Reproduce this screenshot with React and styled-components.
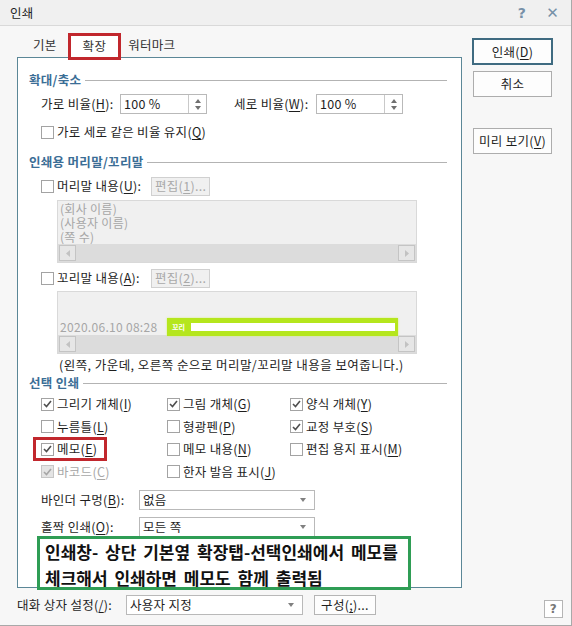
import React from 'react';
import styled, { createGlobalStyle } from 'styled-components';

const GlobalStyle = createGlobalStyle`
  html, body {
    margin: 0;
    padding: 0;
    background: #f7f7f7;
  }
  body {
    font-family: "Noto Sans CJK KR", "Noto Sans", sans-serif;
    font-size: 12.5px;
    letter-spacing: 0.3px;
    color: #1e1e1e;
  }
  u {
    text-decoration-thickness: 1px;
    text-underline-offset: 2px;
  }
`;

// Window frame
const Dialog = styled.div`
  position: relative;
  width: 572px;
  height: 626px;
  box-sizing: border-box;
  background: #f7f7f7;
  border-right: 1px solid #a9a9a9;
  border-bottom: 1px solid #a9a9a9;
  display: flex;
  flex-direction: column;
`;

const TitleBar = styled.div`
  height: 25px;
  flex: 0 0 25px;
  display: flex;
  align-items: center;
  padding: 0 12px 0 10px;
  background: #f0f0f0;
  border-bottom: 1px solid #d9d9d9;
`;

const Title = styled.span`
  font-size: 12.5px;
  line-height: 14px;
  color: #222;
`;

const TitleIcons = styled.div`
  margin-left: auto;
  display: flex;
  align-items: center;
  gap: 20px;
`;

const TitleIcon = styled.span`
  font-family: "DejaVu Sans", sans-serif;
  font-weight: bold;
  font-size: ${p => p.size || 14}px;
  color: #7790a8;
  line-height: 14px;
`;

// Body
const Body = styled.div`
  display: flex;
  padding: 7px 0 0 17px;
  gap: 10px;
`;

const MainColumn = styled.div`
  width: 445px;
  display: flex;
  flex-direction: column;
`;

const TabBar = styled.div`
  height: 24px;
  display: flex;
  align-items: stretch;
  padding-left: 11px;
  gap: 6px;
  position: relative;
  z-index: 1;
`;

const Tab = styled.div`
  display: flex;
  align-items: center;
  padding: ${p => (p.active ? '0 12px' : '0 5px')};
  margin-left: ${p => (p.last ? '-4px' : '0')};
  line-height: 14px;
  color: #333;
  ${p => p.active && `
    background: #fff;
    border: 3px solid #c1272d;
    margin-bottom: -3px;
    box-sizing: border-box;
    padding-bottom: 2px;
  `}
`;

const Panel = styled.div`
  height: 531px;
  box-sizing: border-box;
  background: #fff;
  border: 1px solid #5b8797;
  padding: 13px 14px 0 11px;
  display: flex;
  flex-direction: column;
`;

const GroupHeading = styled.div`
  height: 18px;
  margin-top: ${p => p.gap || 0}px;
  display: flex;
  align-items: center;
  gap: 4px;
  font-weight: bold;
  color: #3b6e96;
  line-height: 14px;

  &::after {
    content: '';
    flex: 1;
    border-top: 1px solid #b3b3b3;
  }
`;

const Row = styled.div`
  height: ${p => p.h || 20}px;
  margin-top: ${p => p.gap || 0}px;
  padding-left: ${p => (p.flush ? 0 : 12)}px;
  display: flex;
  align-items: center;
  line-height: 14px;
`;

const FieldLabel = styled.span`
  width: ${p => p.w}px;
  flex: 0 0 ${p => p.w}px;
  white-space: nowrap;
  color: ${p => (p.muted ? '#a8a8a8' : '#1e1e1e')};
`;

const SpinField = styled.div`
  width: 87px;
  height: 20px;
  box-sizing: border-box;
  display: flex;
  border: 1px solid #b9b9b9;
  background: #fff;
`;

const SpinValue = styled.span`
  flex: 1;
  padding-left: 3px;
  display: flex;
  align-items: center;
`;

const SpinButtons = styled.div`
  width: 17px;
  border-left: 1px solid #c9c9c9;
  display: flex;
  flex-direction: column;
  align-items: center;
  justify-content: center;
  gap: 3px;
`;

const Box = styled.span`
  width: 13px;
  height: 13px;
  flex: 0 0 13px;
  box-sizing: border-box;
  border: 1px solid ${p => (p.disabled ? '#c6c6c6' : '#a3a3a3')};
  background: ${p => (p.disabled ? '#e4e4e4' : '#fff')};
  display: flex;
  align-items: center;
  justify-content: center;
  margin-right: 3px;
`;

const CheckItem = styled.div`
  position: relative;
  justify-self: start;
  display: flex;
  align-items: center;
  white-space: nowrap;
  color: ${p => (p.disabled ? '#a8a8a8' : '#1e1e1e')};

  ${p => p.marked && `
    &::before {
      content: '';
      position: absolute;
      left: -8px;
      right: -10px;
      top: -5px;
      bottom: -5px;
      border: 3px solid #c1272d;
      pointer-events: none;
    }
  `}
`;

const EditButton = styled.span`
  height: 19px;
  box-sizing: border-box;
  padding: 0 3px;
  display: flex;
  align-items: center;
  border: 1px solid #d0d0d0;
  background: #f0f0f0;
  color: #a9a9a9;
`;

const Preview = styled.div`
  margin: ${p => p.gap}px 0 0 28px;
  width: 360px;
  height: ${p => p.h}px;
  box-sizing: border-box;
  border: 1px solid #d9d9d9;
  background: #f0f0f0;
  display: flex;
  flex-direction: column;
`;

const PreviewLines = styled.div`
  flex: 1;
  padding: 1px 0 0 2px;
  color: #a6a6a6;
  line-height: 14px;
  display: flex;
  flex-direction: column;
  justify-content: ${p => (p.bottom ? 'flex-end' : 'flex-start')};
`;

const PreviewLine = styled.span`
  height: 14px;
  font-size: 12px;
  white-space: nowrap;
`;

const FooterLine = styled.div`
  display: flex;
  align-items: center;
  height: 18px;
  margin-bottom: -1px;
  position: relative;
`;

const DateText = styled.span`
  width: 107px;
  flex: 0 0 107px;
  font-size: 12px;
`;

const LimeMark = styled.div`
  width: 231px;
  height: 18px;
  box-sizing: border-box;
  padding: 5px 3px 5px 5px;
  background: #b5e61d;
  box-shadow: 0 0 2px #d7f07a;
  display: flex;
  align-items: center;
  gap: 6px;
`;

const LimeLabel = styled.span`
  font-size: 7px;
  font-weight: bold;
  line-height: 8px;
  letter-spacing: 0;
  color: #fff;
`;

const LimeBar = styled.span`
  flex: 1;
  height: 8px;
  background: #fff;
`;

const ScrollBar = styled.div`
  height: 18px;
  flex: 0 0 18px;
  background: #dcdcdc;
  display: flex;
  align-items: center;
  justify-content: space-between;
  padding: 0 1px;
`;

const ScrollArrow = styled.span`
  width: 17px;
  height: 16px;
  box-sizing: border-box;
  border: 1px solid #c4c4c4;
  background: #e6e6e6;
  display: flex;
  align-items: center;
  justify-content: center;
`;

const Note = styled.div`
  height: 16px;
  margin: 3px 0 0 30px;
  line-height: 16px;
  letter-spacing: 0.45px;
  white-space: nowrap;
`;

const OptionGrid = styled.div`
  display: grid;
  grid-template-columns: 126px 123px 1fr;
  grid-auto-rows: 22.5px;
  align-items: center;
  padding-left: 12px;
  margin-top: 1px;
  line-height: 14px;
`;

const Select = styled.div`
  width: ${p => p.w}px;
  height: 20px;
  box-sizing: border-box;
  border: 1px solid #b9b9b9;
  background: #fff;
  display: flex;
  align-items: center;
  padding: 0 8px 0 3px;
`;

const SelectValue = styled.span`
  flex: 1;
`;

// Right side buttons
const SideColumn = styled.div`
  width: 81px;
  padding-top: 5px;
  display: flex;
  flex-direction: column;
  align-items: flex-end;
`;

const DialogButton = styled.div`
  width: ${p => (p.primary ? 81 : 79)}px;
  height: ${p => (p.primary ? 27 : 26)}px;
  margin-top: ${p => p.gap || 0}px;
  margin-right: ${p => (p.primary ? 0 : 1)}px;
  box-sizing: border-box;
  border: ${p => (p.primary ? '2px solid #3f6b81' : '1px solid #adadad')};
  background: #fdfdfd;
  display: flex;
  align-items: center;
  justify-content: center;
  line-height: 14px;
  white-space: nowrap;
  color: #1e1e1e;
`;

// Footer
const Footer = styled.div`
  display: flex;
  align-items: flex-start;
  padding: 7px 8px 0 17px;
`;

const FooterButton = styled.div`
  margin-left: 11px;
  width: 62px;
  height: 20px;
  box-sizing: border-box;
  border: 1px solid #b5b5b5;
  background: #fdfdfd;
  display: flex;
  align-items: center;
  justify-content: center;
  line-height: 14px;
`;

const HelpButton = styled.div`
  margin: 5px 0 0 auto;
  width: 19px;
  height: 18px;
  box-sizing: border-box;
  border: 1px solid #b5b5b5;
  background: #fff;
  display: flex;
  align-items: center;
  justify-content: center;
  font-family: "DejaVu Sans", sans-serif;
  font-weight: bold;
  font-size: 12px;
  color: #777;
`;

// Annotation laid over the dialog
const Callout = styled.div`
  position: absolute;
  left: 37px;
  top: 536px;
  width: 374px;
  height: 54px;
  box-sizing: border-box;
  border: 3px solid #2f9d55;
  background: #fff;
  padding-left: 5px;
  font-size: 17px;
  font-weight: bold;
  line-height: 26px;
  letter-spacing: 0;
  word-spacing: 3px;
  white-space: nowrap;
  color: #111;
`;

const Check = ({ disabled }) => (
  <svg width="9" height="8" viewBox="0 0 9 8">
    <path d="M1 4 L3.5 6.5 L8 1" fill="none" stroke={disabled ? '#a6a6a6' : '#4f4f4f'} strokeWidth="1.6" />
  </svg>
);

const CheckBox = ({ checked, disabled, marked, children }) => (
  <CheckItem disabled={disabled} marked={marked}>
    <Box disabled={disabled}>{checked && <Check disabled={disabled} />}</Box>
    {children}
  </CheckItem>
);

const Triangle = ({ dir, color = '#707070' }) => {
  const paths = {
    up: 'M0 4 L3 0 L6 4 Z',
    down: 'M0 0 L3 4 L6 0 Z',
    left: 'M4 0 L0 3.5 L4 7 Z',
    right: 'M0 0 L4 3.5 L0 7 Z',
  };
  const horiz = dir === 'left' || dir === 'right';
  return (
    <svg width={horiz ? 4 : 6} height={horiz ? 7 : 4} viewBox={horiz ? '0 0 4 7' : '0 0 6 4'}>
      <path d={paths[dir]} fill={color} />
    </svg>
  );
};

const Spin = ({ value }) => (
  <SpinField>
    <SpinValue>{value}</SpinValue>
    <SpinButtons>
      <Triangle dir="up" />
      <Triangle dir="down" />
    </SpinButtons>
  </SpinField>
);

const Dropdown = ({ w, value }) => (
  <Select w={w}>
    <SelectValue>{value}</SelectValue>
    <Triangle dir="down" color="#808080" />
  </Select>
);

const Scroll = () => (
  <ScrollBar>
    <ScrollArrow><Triangle dir="left" color="#c2c2c2" /></ScrollArrow>
    <ScrollArrow><Triangle dir="right" color="#c2c2c2" /></ScrollArrow>
  </ScrollBar>
);

const options = [
  { label: <>그리기 개체(<u>I</u>)</>, checked: true },
  { label: <>그림 개체(<u>G</u>)</>, checked: true },
  { label: <>양식 개체(<u>Y</u>)</>, checked: true },
  { label: <>누름틀(<u>L</u>)</> },
  { label: <>형광펜(<u>P</u>)</> },
  { label: <>교정 부호(<u>S</u>)</>, checked: true },
  { label: <>메모(<u>E</u>)</>, checked: true, marked: true },
  { label: <>메모 내용(<u>N</u>)</> },
  { label: <>편집 용지 표시(<u>M</u>)</> },
  { label: <>바코드(<u>C</u>)</>, checked: true, disabled: true },
  { label: <>한자 발음 표시(<u>J</u>)</> },
];

export default function App() {
  return (
    <>
      <GlobalStyle />
      <Dialog>
        <TitleBar>
          <Title>인쇄</Title>
          <TitleIcons>
            <TitleIcon size={14}>?</TitleIcon>
            <TitleIcon size={15}>✕</TitleIcon>
          </TitleIcons>
        </TitleBar>

        <Body>
          <MainColumn>
            <TabBar>
              <Tab>기본</Tab>
              <Tab active>확장</Tab>
              <Tab last>워터마크</Tab>
            </TabBar>

            <Panel>
              <GroupHeading>확대/축소</GroupHeading>
              <Row gap={5}>
                <FieldLabel w={79}>가로 비율(<u>H</u>):</FieldLabel>
                <Spin value="100 %" />
                <span style={{ width: 27 }} />
                <FieldLabel w={82}>세로 비율(<u>W</u>):</FieldLabel>
                <Spin value="100 %" />
              </Row>
              <Row gap={8}>
                <CheckBox>가로 세로 같은 비율 유지(<u>Q</u>)</CheckBox>
              </Row>

              <GroupHeading gap={11}>인쇄용 머리말/꼬리말</GroupHeading>
              <Row gap={5}>
                <CheckBox>
                  <FieldLabel w={94}>머리말 내용(<u>U</u>):</FieldLabel>
                </CheckBox>
                <EditButton>편집(<u>1</u>)...</EditButton>
              </Row>
              <Preview gap={4} h={63}>
                <PreviewLines>
                  <PreviewLine>(회사 이름)</PreviewLine>
                  <PreviewLine>(사용자 이름)</PreviewLine>
                  <PreviewLine>(쪽 수)</PreviewLine>
                </PreviewLines>
                <Scroll />
              </Preview>
              <Row gap={5}>
                <CheckBox>
                  <FieldLabel w={94}>꼬리말 내용(<u>A</u>):</FieldLabel>
                </CheckBox>
                <EditButton>편집(<u>2</u>)...</EditButton>
              </Row>
              <Preview gap={3} h={63}>
                <PreviewLines bottom>
                  <FooterLine>
                    <DateText>2020.06.10 08:28</DateText>
                    <LimeMark>
                      <LimeLabel>꼬리</LimeLabel>
                      <LimeBar />
                    </LimeMark>
                  </FooterLine>
                </PreviewLines>
                <Scroll />
              </Preview>
              <Note>(왼쪽, 가운데, 오른쪽 순으로 머리말/꼬리말 내용을 보여줍니다.)</Note>

              <GroupHeading gap={1}>선택 인쇄</GroupHeading>
              <OptionGrid>
                {options.map((o, i) => (
                  <CheckBox key={i} checked={o.checked} disabled={o.disabled} marked={o.marked}>
                    {o.label}
                  </CheckBox>
                ))}
              </OptionGrid>
              <Row gap={7}>
                <FieldLabel w={98}>바인더 구멍(<u>B</u>):</FieldLabel>
                <Dropdown w={176} value="없음" />
              </Row>
              <Row gap={7}>
                <FieldLabel w={98}>홀짝 인쇄(<u>O</u>):</FieldLabel>
                <Dropdown w={176} value="모든 쪽" />
              </Row>
            </Panel>
          </MainColumn>

          <SideColumn>
            <DialogButton primary>인쇄(<u>D</u>)</DialogButton>
            <DialogButton gap={6}>취소</DialogButton>
            <DialogButton gap={31}>미리 보기(<u>V</u>)</DialogButton>
          </SideColumn>
        </Body>

        <Footer>
          <Row flush>
            <FieldLabel w={109}>대화 상자 설정(<u>/</u>):</FieldLabel>
            <Dropdown w={177} value="사용자 지정" />
            <FooterButton>구성(<u>;</u>)...</FooterButton>
          </Row>
          <HelpButton>?</HelpButton>
        </Footer>

        <Callout>
          인쇄창- 상단 기본옆 확장탭-선택인쇄에서 메모를
          <br />
          체크해서 인쇄하면 메모도 함께 출력됨
        </Callout>
      </Dialog>
    </>
  );
}
